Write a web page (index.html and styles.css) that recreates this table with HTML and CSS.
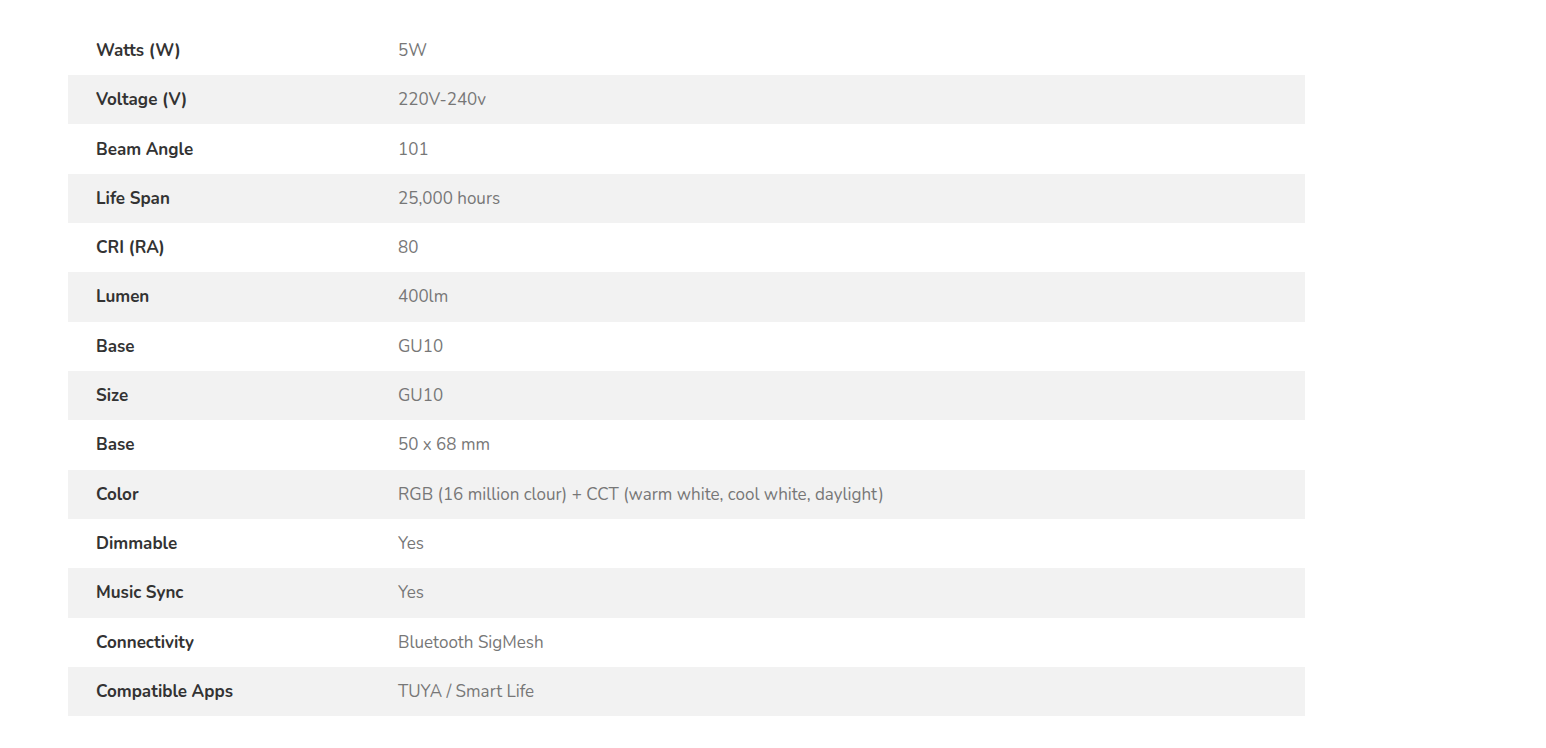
FILE: index.html
```html
<!DOCTYPE html>
<html>
<head>
<meta charset="utf-8">
<link rel="stylesheet" href="styles.css">
</head>
<body>
<div class="page">
<table class="specs">
<tbody>
<tr><th>Watts (W)</th><td>5W</td></tr>
<tr><th>Voltage (V)</th><td>220V-240v</td></tr>
<tr><th>Beam Angle</th><td>101</td></tr>
<tr><th>Life Span</th><td>25,000 hours</td></tr>
<tr><th>CRI (RA)</th><td>80</td></tr>
<tr><th>Lumen</th><td>400lm</td></tr>
<tr><th>Base</th><td>GU10</td></tr>
<tr><th>Size</th><td>GU10</td></tr>
<tr><th>Base</th><td>50 x 68 mm</td></tr>
<tr><th>Color</th><td>RGB (16 million clour) + CCT (warm white, cool white, daylight)</td></tr>
<tr><th>Dimmable</th><td>Yes</td></tr>
<tr><th>Music Sync</th><td>Yes</td></tr>
<tr><th>Connectivity</th><td>Bluetooth SigMesh</td></tr>
<tr><th>Compatible Apps</th><td>TUYA / Smart Life</td></tr>
</tbody>
</table>
</div>
</body>
</html>
```
FILE: styles.css
```css
html, body {
  margin: 0;
  padding: 0;
  background: #fff;
}
body {
  font-family: "Nunito", "Lato", "Open Sans", sans-serif;
  font-size: 17px;
}
.page {
  padding: 25.7px 0 0 68px;
}
.specs {
  width: 1237px;
  border-collapse: collapse;
  table-layout: fixed;
}
.specs tr {
  height: 49.33px;
}
.specs tr:nth-child(even) {
  background: #f2f2f2;
}
.specs th {
  text-align: left;
  font-weight: 700;
  color: #333;
  padding: 0 0 0 28px;
  width: 302px;
}
.specs td {
  color: #777;
  padding: 0;
}
```
